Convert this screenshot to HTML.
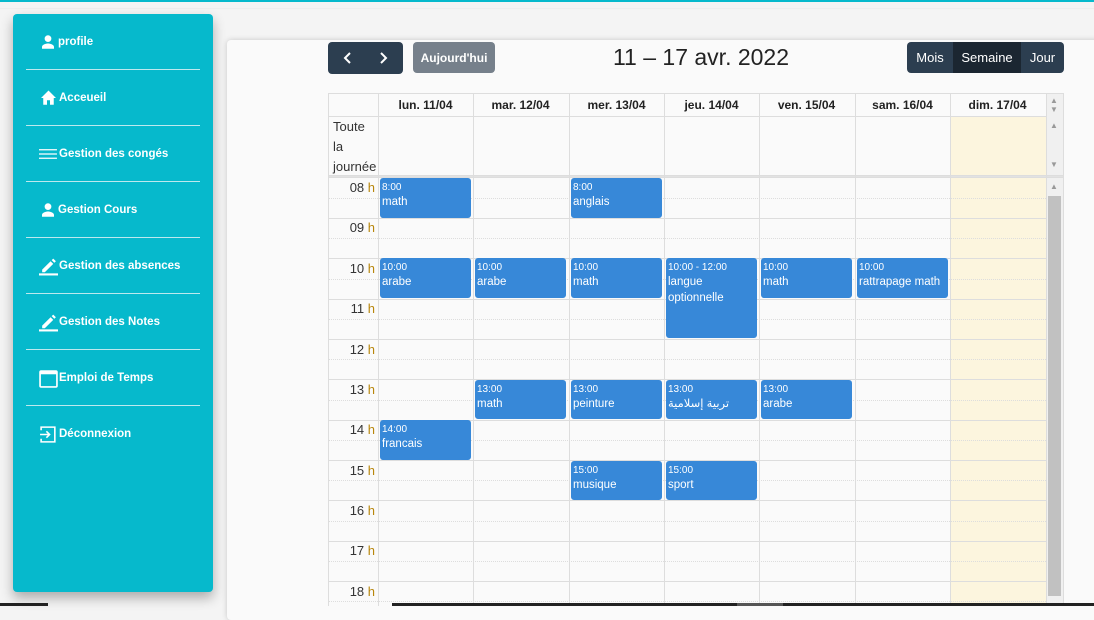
<!DOCTYPE html>
<html><head><meta charset="utf-8"><style>
*{margin:0;padding:0;box-sizing:border-box}
body{width:1094px;height:606px;overflow:hidden;background:#f4f4f4;font-family:"Liberation Sans",sans-serif;position:relative}
.a{position:absolute}
.topline{left:0;top:0;width:1094px;height:2px;background:#06b9cc}
.card{left:227px;top:40px;width:880px;height:580px;background:#fafafa;box-shadow:0 0 6px rgba(0,0,0,.18);border-radius:4px}
.side{left:13px;top:14px;width:200px;height:578px;background:#06b9cc;border-radius:4px;box-shadow:0 6px 12px rgba(0,0,0,.3)}
.item{left:39px;color:#fff;font-weight:bold;font-size:11.5px;height:18px;line-height:18px;display:flex;align-items:center}
.item svg{margin-right:1px}
.sep{left:26px;width:174px;height:1px;background:#bde9ee}
.btn{color:#fff;font-size:13px;display:flex;align-items:center;justify-content:center}
.hl{height:1px;background:#ddd}
.dl{height:0;border-top:1px dotted #ddd}
.vl{width:1px;background:#ddd}
.hd{top:94px;height:23px;font-size:12px;font-weight:bold;color:#222;text-align:center;line-height:22px;width:95px}
.tm{left:330px;width:45px;text-align:right;font-size:13px;color:#333}
.tm span{color:#b8860b}
.ev{background:#3788d8;border:1px solid #3788d8;border-radius:3px;color:#fff;padding:3px 1px;font-size:11.5px;line-height:16px;font-weight:500}
.ev small{font-size:10px;display:block;line-height:12px}
</style></head><body>
<div class="a topline"></div>
<div class="a" style="left:0;top:8px;width:1094px;height:1px;background:#eee"></div>
<div class="a card"></div>
<div class="a side"></div>

<div class="a item" style="top:33px"><svg width="18" height="18" viewBox="0 0 24 24"><path fill="#fff" d="M12 12a4.5 4.5 0 1 0 0-9 4.5 4.5 0 0 0 0 9zm0 2c-3 0-8 1.5-8 4.5V21h16v-2.5c0-3-5-4.5-8-4.5z"/></svg>profile</div>
<div class="a sep" style="top:69px"></div>
<div class="a item" style="top:89px"><svg width="19" height="18" viewBox="0 0 24 24"><path fill="#fff" d="M10 21v-6h4v6h5v-9h3L12 2 2 12h3v9z"/></svg>Acceueil</div>
<div class="a sep" style="top:125px"></div>
<div class="a item" style="top:145px"><svg width="19" height="18" viewBox="0 0 18 16"><path stroke="#fff" stroke-width="1.2" d="M0 4h17M0 8h17M0 12h17"/></svg>Gestion des congés</div>
<div class="a sep" style="top:181px"></div>
<div class="a item" style="top:201px"><svg width="18" height="18" viewBox="0 0 24 24"><path fill="#fff" d="M12 12a4.5 4.5 0 1 0 0-9 4.5 4.5 0 0 0 0 9zm0 2c-3 0-8 1.5-8 4.5V21h16v-2.5c0-3-5-4.5-8-4.5z"/></svg>Gestion Cours</div>
<div class="a sep" style="top:237px"></div>
<div class="a item" style="top:257px"><svg width="19" height="19" viewBox="0 0 18 18"><path fill="#fff" d="M3 12l8-8 2.5 2.5-8 8H3zM12 3l1.5-1.5 2.5 2.5L14.5 5.5z"/><rect x="0" y="15.5" width="18" height="2" fill="#fff"/></svg>Gestion des absences</div>
<div class="a sep" style="top:293px"></div>
<div class="a item" style="top:313px"><svg width="19" height="19" viewBox="0 0 18 18"><path fill="#fff" d="M3 12l8-8 2.5 2.5-8 8H3zM12 3l1.5-1.5 2.5 2.5L14.5 5.5z"/><rect x="0" y="15.5" width="18" height="2" fill="#fff"/></svg>Gestion des Notes</div>
<div class="a sep" style="top:349px"></div>
<div class="a item" style="top:369px"><svg width="19" height="19" viewBox="0 0 18 18"><rect x="1" y="2" width="16" height="15" rx="1" fill="none" stroke="#fff" stroke-width="1.6"/><rect x="1" y="2" width="16" height="3" fill="#fff"/></svg>Emploi de Temps</div>
<div class="a sep" style="top:405px"></div>
<div class="a item" style="top:425px"><svg width="19" height="19" viewBox="0 0 18 18"><path fill="none" stroke="#fff" stroke-width="1.5" d="M2 5V2h13v14H2v-3M1 9h9M7 6l3 3-3 3"/></svg>Déconnexion</div>

<!-- toolbar -->
<div class="a btn" style="left:328px;top:42px;width:75px;height:32px;background:#2c3e50;border-radius:4px">
<svg width="75" height="32"><path d="M22 11l-5 5 5 5M53 11l5 5-5 5" fill="none" stroke="#fff" stroke-width="2"/></svg></div>
<div class="a btn" style="left:413px;top:42px;width:82px;height:31px;background:#76808b;border-radius:4px;font-weight:bold;font-size:12px">Aujourd'hui</div>
<div class="a" style="left:560px;top:42px;width:282px;text-align:center;font-size:23px;color:#222;line-height:30px">11 – 17 avr. 2022</div>
<div class="a" style="left:907px;top:42px;width:157px;height:31px;background:#2c3e50;border-radius:4px;overflow:hidden;display:flex">
<div class="btn" style="width:46px">Mois</div><div class="btn" style="width:68px;background:#1b2631">Semaine</div><div class="btn" style="width:43px">Jour</div></div>

<!-- grid -->
<div class="a" style="left:950px;top:117px;width:96px;height:489px;background:#fcf5de"></div>
<div class="a" style="left:1046px;top:94px;width:17px;height:82px;background:#f0f0f0"></div>
<div class="a" style="left:1046px;top:178px;width:17px;height:428px;background:#f0f0f0"></div>
<div class="a" style="left:1048px;top:196px;width:13px;height:400px;background:#c1c1c1"></div>
<div class="a" style="left:1050px;top:96px;font-size:8px;color:#999;line-height:9px">▲<br>▼</div>
<div class="a" style="left:1050px;top:121px;font-size:8px;color:#999">▲</div>
<div class="a" style="left:1050px;top:160px;font-size:8px;color:#999">▼</div>
<div class="a" style="left:1050px;top:182px;font-size:8px;color:#999">▲</div>

<div class="a hl" style="left:328px;top:93px;width:735px"></div>
<div class="a hl" style="left:328px;top:116px;width:718px"></div>
<div class="a hl" style="left:328px;top:175px;width:735px;height:3px;background:#e2e2e2;border-top:1px solid #ddd;border-bottom:1px solid #ddd"></div>
<div class="a vl" style="left:328px;top:93px;height:513px"></div>
<div class="a vl" style="left:378px;top:93px;height:513px"></div>
<div class="a vl" style="left:473px;top:93px;height:513px"></div>
<div class="a vl" style="left:569px;top:93px;height:513px"></div>
<div class="a vl" style="left:664px;top:93px;height:513px"></div>
<div class="a vl" style="left:759px;top:93px;height:513px"></div>
<div class="a vl" style="left:855px;top:93px;height:513px"></div>
<div class="a vl" style="left:950px;top:93px;height:513px"></div>
<div class="a vl" style="left:1046px;top:93px;height:513px"></div>
<div class="a vl" style="left:1063px;top:93px;height:513px"></div>

<div class="a hd" style="left:378px">lun. 11/04</div>
<div class="a hd" style="left:473px">mar. 12/04</div>
<div class="a hd" style="left:569px">mer. 13/04</div>
<div class="a hd" style="left:664px">jeu. 14/04</div>
<div class="a hd" style="left:759px">ven. 15/04</div>
<div class="a hd" style="left:855px">sam. 16/04</div>
<div class="a hd" style="left:950px">dim. 17/04</div>
<div class="a" style="left:333px;top:117px;font-size:13px;line-height:20px;color:#333">Toute<br>la<br>journée</div>

<div class="a dl" style="left:328px;top:198px;width:718px"></div>
<div class="a hl" style="left:328px;top:218px;width:718px"></div>
<div class="a dl" style="left:328px;top:238px;width:718px"></div>
<div class="a hl" style="left:328px;top:258px;width:718px"></div>
<div class="a dl" style="left:328px;top:279px;width:718px"></div>
<div class="a hl" style="left:328px;top:299px;width:718px"></div>
<div class="a dl" style="left:328px;top:319px;width:718px"></div>
<div class="a hl" style="left:328px;top:339px;width:718px"></div>
<div class="a dl" style="left:328px;top:359px;width:718px"></div>
<div class="a hl" style="left:328px;top:379px;width:718px"></div>
<div class="a dl" style="left:328px;top:400px;width:718px"></div>
<div class="a hl" style="left:328px;top:420px;width:718px"></div>
<div class="a dl" style="left:328px;top:440px;width:718px"></div>
<div class="a hl" style="left:328px;top:460px;width:718px"></div>
<div class="a dl" style="left:328px;top:480px;width:718px"></div>
<div class="a hl" style="left:328px;top:500px;width:718px"></div>
<div class="a dl" style="left:328px;top:521px;width:718px"></div>
<div class="a hl" style="left:328px;top:541px;width:718px"></div>
<div class="a dl" style="left:328px;top:561px;width:718px"></div>
<div class="a hl" style="left:328px;top:581px;width:718px"></div>
<div class="a dl" style="left:328px;top:601px;width:718px"></div>

<div class="a tm" style="top:180px">08 <span>h</span></div>
<div class="a tm" style="top:220px">09 <span>h</span></div>
<div class="a tm" style="top:261px">10 <span>h</span></div>
<div class="a tm" style="top:301px">11 <span>h</span></div>
<div class="a tm" style="top:342px">12 <span>h</span></div>
<div class="a tm" style="top:382px">13 <span>h</span></div>
<div class="a tm" style="top:422px">14 <span>h</span></div>
<div class="a tm" style="top:463px">15 <span>h</span></div>
<div class="a tm" style="top:503px">16 <span>h</span></div>
<div class="a tm" style="top:543px">17 <span>h</span></div>
<div class="a tm" style="top:584px">18 <span>h</span></div>

<div class="a ev" style="left:380px;top:178px;width:91px;height:40px"><small>8:00</small>math</div>
<div class="a ev" style="left:571px;top:178px;width:91px;height:40px"><small>8:00</small>anglais</div>
<div class="a ev" style="left:380px;top:258px;width:91px;height:40px"><small>10:00</small>arabe</div>
<div class="a ev" style="left:475px;top:258px;width:91px;height:40px"><small>10:00</small>arabe</div>
<div class="a ev" style="left:571px;top:258px;width:91px;height:40px"><small>10:00</small>math</div>
<div class="a ev" style="left:666px;top:258px;width:91px;height:80px"><small>10:00 - 12:00</small>langue optionnelle</div>
<div class="a ev" style="left:761px;top:258px;width:91px;height:40px"><small>10:00</small>math</div>
<div class="a ev" style="left:857px;top:258px;width:91px;height:40px"><small>10:00</small>rattrapage math</div>
<div class="a ev" style="left:475px;top:380px;width:91px;height:39px"><small>13:00</small>math</div>
<div class="a ev" style="left:571px;top:380px;width:91px;height:39px"><small>13:00</small>peinture</div>
<div class="a ev" style="left:666px;top:380px;width:91px;height:39px;font-family:'Liberation Sans','DejaVu Sans',sans-serif"><small>13:00</small>تربية إسلامية</div>
<div class="a ev" style="left:761px;top:380px;width:91px;height:39px"><small>13:00</small>arabe</div>
<div class="a ev" style="left:380px;top:420px;width:91px;height:40px"><small>14:00</small>francais</div>
<div class="a ev" style="left:571px;top:461px;width:91px;height:39px"><small>15:00</small>musique</div>
<div class="a ev" style="left:666px;top:461px;width:91px;height:39px"><small>15:00</small>sport</div>

<div class="a" style="left:0;top:603px;width:48px;height:3px;background:#222"></div>
<div class="a" style="left:392px;top:603px;width:702px;height:3px;background:#222"></div>
<div class="a" style="left:737px;top:603px;width:46px;height:3px;background:#555"></div>
</body></html>
